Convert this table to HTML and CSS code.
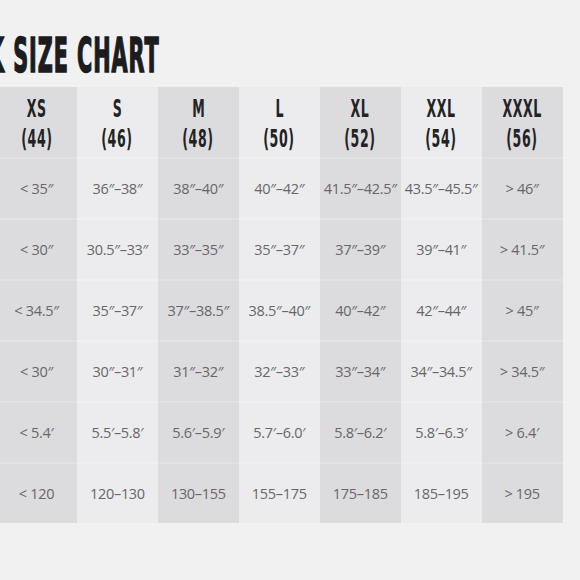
FILE: index.html
```html
<!DOCTYPE html>
<html>
<head>
<meta charset="utf-8">
<link rel="stylesheet" href="styles.css">
</head>
<body>
<div class="page">
  <h1 class="title"><span class="title-inner">K SIZE CHART</span></h1>
  <div class="chart">
    <div class="col dark">
      <div class="head"><span>XS</span><span>(44)</span></div>
      <div class="cell">&lt; 35″</div>
      <div class="cell">&lt; 30″</div>
      <div class="cell">&lt; 34.5″</div>
      <div class="cell">&lt; 30″</div>
      <div class="cell">&lt; 5.4′</div>
      <div class="cell">&lt; 120</div>
    </div>
    <div class="col light">
      <div class="head"><span>S</span><span>(46)</span></div>
      <div class="cell">36″–38″</div>
      <div class="cell">30.5″–33″</div>
      <div class="cell">35″–37″</div>
      <div class="cell">30″–31″</div>
      <div class="cell">5.5′–5.8′</div>
      <div class="cell">120–130</div>
    </div>
    <div class="col dark">
      <div class="head"><span>M</span><span>(48)</span></div>
      <div class="cell">38″–40″</div>
      <div class="cell">33″–35″</div>
      <div class="cell">37″–38.5″</div>
      <div class="cell">31″–32″</div>
      <div class="cell">5.6′–5.9′</div>
      <div class="cell">130–155</div>
    </div>
    <div class="col light">
      <div class="head"><span>L</span><span>(50)</span></div>
      <div class="cell">40″–42″</div>
      <div class="cell">35″–37″</div>
      <div class="cell">38.5″–40″</div>
      <div class="cell">32″–33″</div>
      <div class="cell">5.7′–6.0′</div>
      <div class="cell">155–175</div>
    </div>
    <div class="col dark">
      <div class="head"><span>XL</span><span>(52)</span></div>
      <div class="cell">41.5″–42.5″</div>
      <div class="cell">37″–39″</div>
      <div class="cell">40″–42″</div>
      <div class="cell">33″–34″</div>
      <div class="cell">5.8′–6.2′</div>
      <div class="cell">175–185</div>
    </div>
    <div class="col light">
      <div class="head"><span>XXL</span><span>(54)</span></div>
      <div class="cell">43.5″–45.5″</div>
      <div class="cell">39″–41″</div>
      <div class="cell">42″–44″</div>
      <div class="cell">34″–34.5″</div>
      <div class="cell">5.8′–6.3′</div>
      <div class="cell">185–195</div>
    </div>
    <div class="col dark">
      <div class="head"><span>XXXL</span><span>(56)</span></div>
      <div class="cell">&gt; 46″</div>
      <div class="cell">&gt; 41.5″</div>
      <div class="cell">&gt; 45″</div>
      <div class="cell">&gt; 34.5″</div>
      <div class="cell">&gt; 6.4′</div>
      <div class="cell">&gt; 195</div>
    </div>
  </div>
</div>
</body>
</html>
```

FILE: styles.css
```css
html, body {
  margin: 0;
  padding: 0;
  background: #f1f1f2;
  overflow: hidden;
}
.page {
  width: 580px;
  height: 580px;
  overflow: hidden;
  padding-top: 30px;
  box-sizing: border-box;
}
.title {
  margin: 0 0 0 -12px;
  height: 57px;
  font-family: "DejaVu Sans Condensed", "DejaVu Sans", sans-serif;
  font-stretch: condensed;
  font-weight: bold;
  font-size: 48px;
  line-height: 50px;
  color: #1c1c1e;
  white-space: nowrap;
  letter-spacing: 2px;
}
.title-inner {
  display: inline-block;
  transform: scaleX(0.48);
  transform-origin: left center;
  -webkit-text-stroke: 1.6px #1c1c1e;
}
.chart {
  display: grid;
  grid-template-columns: repeat(7, 80.95px);
  margin-left: -4px;
}
.col {
  display: grid;
  grid-template-rows: 70px repeat(6, 61px);
}
.dark { background: #dcdbdd; }
.light { background: #ececee; }
.head {
  display: flex;
  flex-direction: column;
  align-items: center;
  justify-content: center;
  text-align: center;
  font-family: "DejaVu Sans Condensed", "DejaVu Sans", sans-serif;
  font-stretch: condensed;
  font-weight: bold;
  font-size: 25px;
  line-height: 30px;
  color: #232325;
  padding-top: 4px;
  box-sizing: border-box;
}
.head span {
  display: block;
  transform: scaleX(0.56);
  letter-spacing: 1px;
}
.cell {
  display: flex;
  align-items: center;
  justify-content: center;
  font-family: "Open Sans", sans-serif;
  font-size: 14.5px;
  color: #67676a;
  white-space: nowrap;
  border-top: 2px solid rgba(255, 255, 255, 0.2);
  box-sizing: border-box;
  letter-spacing: -0.3px;
}
```
